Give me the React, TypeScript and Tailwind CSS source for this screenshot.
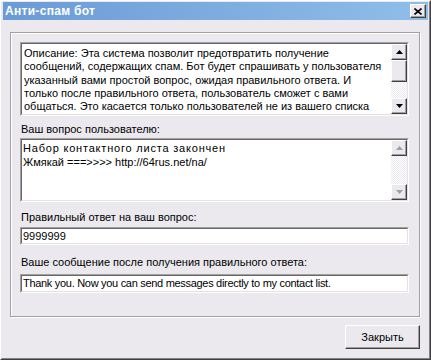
const face = "bg-[#ebe9ee]";
const font = { fontFamily: '"Liberation Sans", Arial, sans-serif' };

const descLines = [
  "Описание: Эта система позволит предотвратить получение",
  "сообщений, содержащих спам. Бот будет спрашивать у пользователя",
  "указанный вами простой вопрос, ожидая правильного ответа. И",
  "только после правильного ответа, пользователь сможет с вами",
  "общаться. Это касается только пользователей не из вашего списка",
];

function Arrow({ up, disabled }: { up?: boolean; disabled?: boolean }) {
  return (
    <div className="h-[16px] w-[16px] shrink-0 border border-t-white border-l-white border-r-[#404040] border-b-[#404040] bg-[#ebe9ee] shadow-[inset_-1px_-1px_0_#a0a0a0] flex items-center justify-center">
      <svg width="7" height="4" viewBox="0 0 7 4">
        {up ? (
          <polygon points="3.5,0 7,4 0,4" fill={disabled ? "#a0a0a0" : "#000"} />
        ) : (
          <polygon points="0,0 7,0 3.5,4" fill={disabled ? "#a0a0a0" : "#000"} />
        )}
      </svg>
    </div>
  );
}

const dither =
  "bg-[repeating-conic-gradient(#ebe9ee_0_25%,#ffffff_0_50%)] bg-[length:2px_2px]";

function Sunken({ className, children }: { className?: string; children: React.ReactNode }) {
  return (
    <div
      className={
        "border border-t-[#a0a0a0] border-l-[#a0a0a0] border-r-white border-b-white " + (className ?? "")
      }
    >
      <div className="h-full w-full border border-t-[#696969] border-l-[#696969] border-r-[#e3e3e3] border-b-[#e3e3e3] bg-white flex">
        {children}
      </div>
    </div>
  );
}

export default function App() {
  return (
    <div className="w-[431px] h-[360px] overflow-hidden" style={font}>
      <div className="h-full w-full border border-t-white border-l-white border-r-[#404040] border-b-[#404040]">
        <div
          className={
            "h-full w-full flex flex-col border border-t-[#ebe9ee] border-l-[#ebe9ee] border-r-[#808080] border-b-[#808080] pl-px pr-px pb-px " +
            face
          }
        >
          {/* title bar */}
          <div className="h-[18px] shrink-0 flex items-center justify-between bg-gradient-to-r from-[#6b9bd6] to-[#8fbee9] pl-[2px] pr-[2px]">
            <span className="text-[12px] font-bold text-white leading-none tracking-[0.3px]">Анти-спам бот</span>
            <div className="h-[14px] w-[16px] border border-t-white border-l-white border-r-[#404040] border-b-[#404040] bg-[#ebe9ee] shadow-[inset_-1px_-1px_0_#a0a0a0] flex items-center justify-center">
              <svg width="8" height="7" viewBox="0 0 8 7">
                <path d="M0.5 0.5 L7.5 6.5 M7.5 0.5 L0.5 6.5" stroke="#000" strokeWidth="1.6" />
              </svg>
            </div>
          </div>

          {/* body */}
          <div className="flex-1 flex flex-col pl-[7px] pt-[12px]">
            <div className="w-[410px] h-[285px] border border-[#a0a0a0] shadow-[inset_1px_1px_0_#fff,1px_1px_0_#fff] pt-[9px] pl-[9px] text-[11px] text-black">
              <Sunken className="w-[389px] h-[74px]">
                <div className="flex-1 overflow-hidden pl-[2px] pt-[3px] leading-[13.3px] whitespace-nowrap">
                  {descLines.map((l) => (
                    <div key={l}>{l}</div>
                  ))}
                </div>
                <div className="w-[16px] flex flex-col">
                  <Arrow up />
                  <div className="h-[22px] border border-t-white border-l-white border-r-[#404040] border-b-[#404040] bg-[#ebe9ee] shadow-[inset_-1px_-1px_0_#a0a0a0]" />
                  <div className={"flex-1 " + dither} />
                  <Arrow />
                </div>
              </Sunken>

              <div className="mt-[7px] leading-[13px] pl-px">Ваш вопрос пользователю:</div>

              <Sunken className="mt-[2px] w-[389px] h-[64px]">
                <div className="flex-1 overflow-hidden pl-px pt-[2px] leading-[13.5px] whitespace-nowrap">
                  <div className="tracking-[0.8px]">Набор контактного листа закончен</div>
                  <div>Жмякай ===&gt;&gt;&gt;&gt; http://64rus.net/na/</div>
                </div>
                <div className="w-[16px] flex flex-col">
                  <Arrow up disabled />
                  <div className={"flex-1 " + dither} />
                  <Arrow disabled />
                </div>
              </Sunken>

              <div className="mt-[9px] leading-[13px] pl-px">Правильный ответ на ваш вопрос:</div>

              <Sunken className="mt-[3px] w-[389px] h-[18px]">
                <div className="flex-1 flex items-center pl-px leading-none">9999999</div>
              </Sunken>

              <div className="mt-[11px] leading-[13px] pl-px">Ваше сообщение после получения правильного ответа:</div>

              <Sunken className="mt-[5px] w-[389px] h-[19px]">
                <div className="flex-1 flex items-center pl-px leading-none tracking-[-0.3px]">
                  Thank you. Now you can send messages directly to my contact list.
                </div>
              </Sunken>
            </div>

            <div className="w-[410px] flex justify-end mt-[8px]">
              <button className="w-[75px] h-[24px] border border-t-white border-l-white border-r-[#404040] border-b-[#404040] bg-[#ebe9ee] shadow-[inset_-1px_-1px_0_#a0a0a0] text-[11px] text-black flex items-center justify-center">
                Закрыть
              </button>
            </div>
          </div>
        </div>
      </div>
    </div>
  );
}
